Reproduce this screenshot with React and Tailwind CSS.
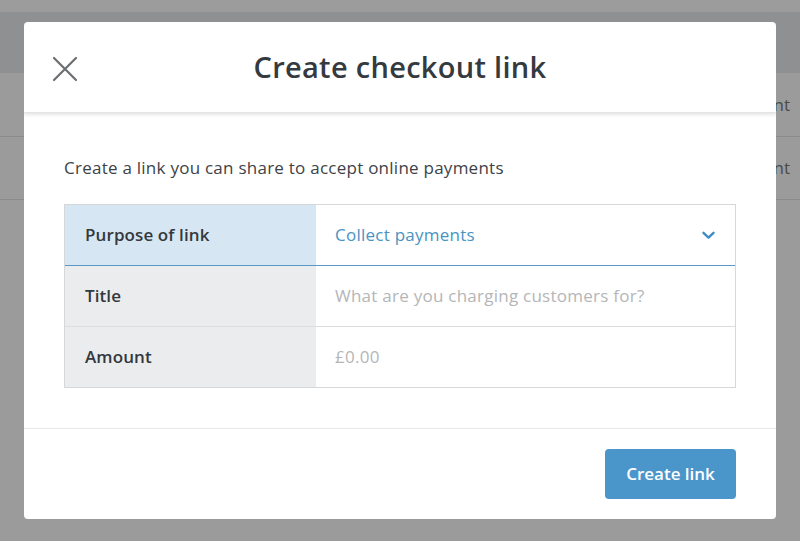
import React from "react";

const rows = [
  { label: "Purpose of link", kind: "select", value: "Collect payments" },
  { label: "Title", kind: "input", value: "What are you charging customers for?" },
  { label: "Amount", kind: "input", value: "£0.00" },
];

const Chevron = () => (
  <svg width="13" height="9" viewBox="0 0 13 9" fill="none">
    <path d="M1.5 1.8 6.5 6.6 11.5 1.8" stroke="#3f8dc4" strokeWidth="2.4" strokeLinecap="round" strokeLinejoin="round" />
  </svg>
);

const CloseIcon = () => (
  <svg width="26" height="26" viewBox="0 0 26 26" fill="none">
    <path d="M2 2 24 24 M24 2 2 24" stroke="#6b6e72" strokeWidth="2.2" strokeLinecap="round" />
  </svg>
);

const FormRow = ({ row }) => {
  const active = row.kind === "select";
  return (
    <div className="flex h-[60px]">
      <div
        className={`w-[251px] shrink-0 flex items-center pl-[20px] text-[17px] tracking-[0.1px] font-semibold text-[#33383d] ${
          active ? "bg-[#d6e7f3]" : "bg-[#ebecee]"
        }`}
      >
        {row.label}
      </div>
      <div className="flex-1 flex items-center pl-[19px] pr-[20px] bg-white text-[17px] tracking-[0.25px]">
        {active ? (
          <>
            <span className="flex-1 text-[#4a93c2]">{row.value}</span>
            <Chevron />
          </>
        ) : (
          <span className="text-[#b4b6b8]">{row.value}</span>
        )}
      </div>
    </div>
  );
};

export default function App() {
  return (
    <div className="relative w-[800px] h-[541px] overflow-hidden bg-[#9b9b9b] font-['Open_Sans',sans-serif]">
      {/* page behind the overlay */}
      <div className="h-[12px] bg-[#9c9c9c]" />
      <div className="h-[61px] bg-[#8f9092]" />
      <div className="h-[64px] border-b border-[#8a8a8a] flex items-center justify-end pr-[10px] text-[17px] text-[#4a4a4a]">
        Payment
      </div>
      <div className="h-[63px] border-b border-[#8a8a8a] flex items-center justify-end pr-[10px] text-[17px] text-[#4a4a4a]">
        Payment
      </div>

      {/* modal */}
      <div className="absolute left-[24px] top-[22px] w-[752px] h-[497px] bg-white rounded-[4px] flex flex-col overflow-hidden">
        <div className="relative z-10 h-[91px] shrink-0 flex items-center justify-center shadow-[0_2px_3px_rgba(0,0,0,0.10)] border-b border-[#e4e4e4]">
          <button className="absolute left-[28px] top-[34px]">
            <CloseIcon />
          </button>
          <h1 className="text-[29px] tracking-[0.3px] font-semibold text-[#353a40]">Create checkout link</h1>
        </div>

        <div className="flex-1 px-[40px] pt-[43px]">
          <p className="text-[17px] tracking-[0.25px] leading-[24px] text-[#3d4247]">
            Create a link you can share to accept online payments
          </p>
          <div className="mt-[24px] border border-[#d6d7d8]">
            <FormRow row={rows[0]} />
            <div className="h-[1px] bg-[#5a98c8]" />
            <FormRow row={rows[1]} />
            <div className="h-[1px] bg-[#dcdddf]" />
            <FormRow row={rows[2]} />
          </div>
        </div>

        <div className="h-[91px] shrink-0 border-t border-[#e8e8e8] flex items-center justify-end px-[40px]">
          <button className="w-[131px] h-[50px] rounded-[4px] bg-[#4a96cb] text-white text-[17px] font-semibold">
            Create link
          </button>
        </div>
      </div>
    </div>
  );
}
